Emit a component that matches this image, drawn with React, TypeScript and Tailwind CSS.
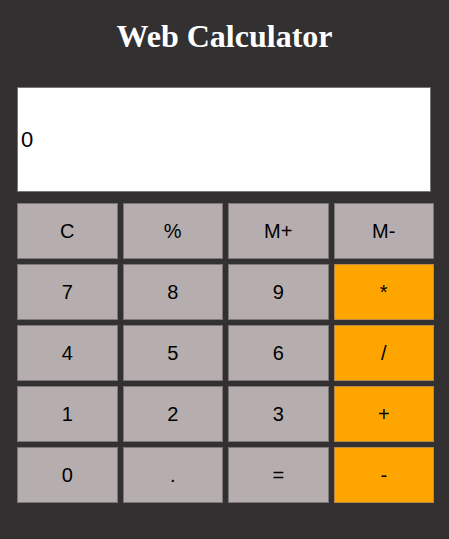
import React, { useState } from 'react';

const keys: { label: string; op?: boolean }[] = [
  { label: 'C' }, { label: '%' }, { label: 'M+' }, { label: 'M-' },
  { label: '7' }, { label: '8' }, { label: '9' }, { label: '*', op: true },
  { label: '4' }, { label: '5' }, { label: '6' }, { label: '/', op: true },
  { label: '1' }, { label: '2' }, { label: '3' }, { label: '+', op: true },
  { label: '0' }, { label: '.' }, { label: '=' }, { label: '-', op: true },
];

export default function App() {
  const [display] = useState('0');

  return (
    <div className="w-[449px] h-[539px] bg-[#323030] flex flex-col items-center">
      <h1 className="mt-[18px] text-[32px] leading-[37px] font-bold text-white font-['Liberation_Serif',serif]">
        Web Calculator
      </h1>
      <div className="mt-[32px] w-[417px] ml-[2px]">
        <div className="w-[414px] h-[105px] bg-white border border-[#777] flex items-center pl-[3px] text-[22px] text-black font-['Liberation_Sans',Arial,sans-serif]">
          {display}
        </div>
        <div className="mt-[11px] grid grid-cols-4 gap-x-[5px] gap-y-[5px]">
          {keys.map((k) => (
            <button
              key={k.label}
              className={`h-[56px] border flex items-center justify-center text-[20px] text-black font-['Liberation_Sans',Arial,sans-serif] ${
                k.op ? 'bg-[#ffa500] border-[#b58a4a]' : 'bg-[#b6aeae] border-[#7d7777]'
              }`}
            >
              {k.label}
            </button>
          ))}
        </div>
      </div>
    </div>
  );
}
